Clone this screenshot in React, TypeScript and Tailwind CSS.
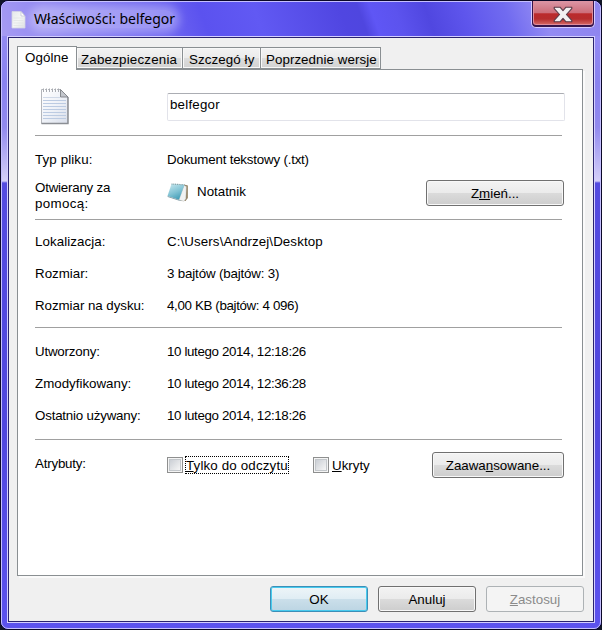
import type { ReactNode } from "react";

function PageIcon() {
  return (
    <svg width="16" height="20" viewBox="0 0 16 20" className="shrink-0">
      <defs>
        <linearGradient id="page" x1="0" y1="0" x2="1" y2="1">
          <stop offset="0" stopColor="#e4e8ea" />
          <stop offset="0.5" stopColor="#f4f6f5" />
          <stop offset="1" stopColor="#dde0e3" />
        </linearGradient>
      </defs>
      <path d="M1 1.5H10L14 6V18H1Z" fill="url(#page)" stroke="#d4d5e4" strokeWidth="0.8" />
      <path d="M10 1.5V6H14Z" fill="#fff" stroke="#b5b6cb" strokeWidth="0.6" />
      <path d="M2.5 8H12.5M2.5 10.5H12.5M2.5 13H12.5M2.5 15.5H12.5" stroke="#dfe3e4" strokeWidth="0.7" />
    </svg>
  );
}

function TextFileIcon() {
  return (
    <svg width="30" height="38" viewBox="0 0 30 38" className="shrink-0">
      <defs>
        <linearGradient id="sheet" x1="0" y1="0" x2="1" y2="1">
          <stop offset="0" stopColor="#ffffff" />
          <stop offset="0.5" stopColor="#eff2f8" />
          <stop offset="1" stopColor="#d9deea" />
        </linearGradient>
      </defs>
      <path d="M1.5 2.5H20.5L27.8 10V36.5H1.5Z" fill="url(#sheet)" stroke="#b4b6bb" />
      <path d="M1.5 36.5H28V10" fill="none" stroke="#8b8e94" strokeWidth="1.4" />
      <path d="M3 13.5H26M3 16.5H26M3 19.5H26M3 22.5H26M3 25.5H26M3 28.5H26M3 31.5H26" stroke="#bccbe2" />
      <path d="M3 10.5H20" stroke="#d0d9e8" />
      <path d="M20.5 2.5L28 10H20.5Z" fill="#c3c6cc" stroke="#7d8086" strokeWidth="0.9" />
      <path d="M3.500 1.500V5M6.500 1.500V5M9.500 1.500V5M12.500 1.500V5M15.500 1.500V5M18.500 1.500V5" stroke="#a9acb2" strokeWidth="1" />
      <path d="M4.500 1.500V4.500M7.500 1.500V4.500M10.500 1.500V4.500M13.500 1.500V4.500M16.500 1.500V4.500" stroke="#fff" strokeWidth="1" />
    </svg>
  );
}

function NotepadIcon() {
  return (
    <svg width="22" height="20" viewBox="0 0 22 20" className="mt-[3px] shrink-0">
      <defs>
        <linearGradient id="cover" x1="0.2" y1="0" x2="0.7" y2="1">
          <stop offset="0" stopColor="#c0e4ec" />
          <stop offset="0.5" stopColor="#83c4d5" />
          <stop offset="1" stopColor="#3b99b4" />
        </linearGradient>
      </defs>
      <path d="M17 1.5L20.8 2.5V15L18.5 18L13 17.5Z" fill="#8d7b5c" />
      <path d="M17 2.5L19.3 3.5L18.8 15.5L17 18.3L12 17Z" fill="#f0f2f2" stroke="#c8c8c4" strokeWidth="0.5" />
      <path d="M4.5 1L17.5 1.8L12 16.8L0.5 13Z" fill="url(#cover)" />
      <path d="M0.5 13L12 16.8L15 17.8L11.5 17.6L0.8 14Z" fill="#7b9aa5" />
      <path d="M4.5 1L17.5 1.8" stroke="#7e9ca2" strokeWidth="1.2" strokeDasharray="1 0.8" />
    </svg>
  );
}

function CloseButton() {
  return (
    <button className="flex h-[27px] w-[64px] items-start justify-center rounded-b-[5px] border border-t-0 border-[#d6caff] bg-[#35144a] p-px pt-0">
      <span className="flex h-[24px] w-full items-center justify-center rounded-b-[3px] border border-t-0 border-[#e08c9a] bg-[linear-gradient(180deg,#dc96a6_0%,#cd6f7b_50%,#bb2a2c_56%,#b62d2e_78%,#d0605e_100%)]">
        <svg width="20" height="17" viewBox="0 0 20 17" className="mt-[3px]">
          <path
            d="M1.2 1.2H7L10 4.6L13 1.2H18.8V2.6L13.4 8.5L18.8 14.4V15.8H13L10 12.4L7 15.8H1.2V14.4L6.6 8.5L1.2 2.6Z"
            fill="#f3f0f1"
            stroke="#5b3b49"
            strokeWidth="1.1"
            strokeLinejoin="round"
          />
        </svg>
      </span>
    </button>
  );
}

function Button({ children, className, kind = "normal" }: { children: ReactNode; className: string; kind?: "normal" | "primary" | "disabled" }) {
  const look = {
    normal: "border-[#707070] bg-[linear-gradient(180deg,#f3f3f3_0%,#ebebeb_48%,#dbdbdb_50%,#cdcdcd_100%)] shadow-[inset_0_0_0_1px_#f8f8f8]",
    primary: "border-[#3c8fb8] bg-[linear-gradient(180deg,#eef5f8_0%,#e0edf4_48%,#cbdfea_50%,#bcd5e3_100%)] shadow-[inset_0_0_0_1px_#48cbee]",
    disabled: "border-[#adb2b5] bg-[#f4f4f4] text-[#8b8b8b]",
  }[kind];
  return (
    <button className={`flex h-[26px] shrink-0 items-center justify-center rounded-[3px] border pt-[2px] leading-4 whitespace-nowrap ${look} ${className}`}>
      <span>{children}</span>
    </button>
  );
}

function Tab({ children, className }: { children: ReactNode; className: string }) {
  return (
    <div className={`h-[22px] border border-l-0 border-[#8a8f92] bg-[linear-gradient(180deg,#f3f3f3_0%,#ebebeb_48%,#dddddd_50%,#d2d2d2_100%)] pt-[4px] leading-4 whitespace-nowrap shadow-[inset_0_0_0_1px_#f8f8f8] ${className}`}>
      {children}
    </div>
  );
}

function Row({ label, children, labelClass = "", valueClass = "" }: { label: string; children: ReactNode; labelClass?: string; valueClass?: string }) {
  return (
    <div className="flex h-8 items-start whitespace-nowrap">
      <span className={`w-[132px] shrink-0 ${labelClass}`}>{label}</span>
      <span className={valueClass}>{children}</span>
    </div>
  );
}

function Separator() {
  return <div className="h-px w-[527px] shrink-0 bg-[#a0a0a0]" />;
}

function CheckBox() {
  return (
    <span className="size-4 border border-[#8e8f8f] bg-[#f4f4f4] p-px">
      <span className="block size-3 border border-[#c3c7cb] bg-[linear-gradient(135deg,#cbcfd5,#f6f6f6)]" />
    </span>
  );
}

export default function App() {
  return (
    <div className="flex h-[630px] w-[602px] flex-col overflow-hidden bg-[#111626] font-['Liberation_Sans',Arial,sans-serif] text-[13.333px] leading-4 text-black">
      <div className="flex h-[630px] flex-col rounded-[8px] border border-[#0b0828] bg-[#5147e4]">
        <div className="flex h-[628px] flex-col rounded-[7px] border border-[#c5bfff] bg-[linear-gradient(180deg,#9a90f5_0px,#8982ef_80px,#9189ee_125px,#d4cff8_179px,#544be0_181px,#5047de_430px,#5c52ee_100%)]">
          <header className="flex h-[34px] shrink-0 rounded-t-[6px] bg-[linear-gradient(70deg,#a69bf2_0%,#8b82f2_12%,#7168f1_26%,#5b52ef_34%,#6159f3_43%,#5046e1_57%,#4f46df_60%,#5f56f5_62%,#5c53ee_66%,#5047e0_71%,#5e55ec_77%,#716bf0_84%,#938bf3_90%,#8e84ee_100%)]">
            <div className="flex grow pt-[8px] pl-[9px]">
              <PageIcon />
              <span className="ml-[7px] h-[18px] rounded-[9px] bg-white/30 font-['Noto_Sans','Open_Sans',sans-serif] text-[14px] leading-[18px] whitespace-nowrap shadow-[0_0_9px_5px_rgba(255,255,255,0.3)]">
                Właściwości: belfegor
              </span>
            </div>
            <div className="-mt-px mr-[5px]">
              <CloseButton />
            </div>
          </header>
          <div className="mx-[5px] h-[587px] border border-[#d4ceff]">
            <main className="flex h-[585px] flex-col border border-[#2a236f] bg-[#f0f0f0] pl-[8px]">
              <div className="flex h-[31px] shrink-0 items-end">
                <div className="z-10 -mb-px h-[24px] w-[60px] border border-b-0 border-[#8a8f92] bg-white pt-[3px] pl-[7px] tracking-[0.1px]">Ogólne</div>
                <Tab className="w-[106px] pl-[4px] tracking-[0.2px]">Zabezpieczenia</Tab>
                <Tab className="w-[78px] pl-[6px] tracking-[0.1px]">Szczegó ły</Tab>
                <Tab className="w-[120px] pl-[5px] tracking-[0.06px]">Poprzednie wersje</Tab>
              </div>
              <section className="flex h-[507px] w-[566px] shrink-0 flex-col border border-[#8a8f92] bg-white pl-[17px] shadow-[2px_2px_0_#fafafa]">
                <div className="flex h-[65px] shrink-0">
                  <div className="w-[132px] pt-[17px] pl-[5px]">
                    <TextFileIcon />
                  </div>
                  <div className="mt-[23px] h-[28px] w-[398px] rounded-[2px] border border-[#e2e3ea] border-t-[#abadb3] pt-[3px] pl-[2px] tracking-[0.2px]">belfegor</div>
                </div>
                <Separator />
                <div className="flex h-[83px] shrink-0 flex-col pt-[16px]">
                  <div className="h-[28px]">
                    <Row label="Typ pliku:" labelClass="tracking-[0.12px]" valueClass="tracking-[-0.2px]">Dokument tekstowy (.txt)</Row>
                  </div>
                  <div className="flex">
                    <div className="w-[132px] shrink-0">
                      <span className="block tracking-[-0.22px]">Otwierany za</span>
                      <span className="block tracking-[0.35px]">pomocą:</span>
                    </div>
                    <NotepadIcon />
                    <span className="mt-[4px] ml-[8px] w-[229px]">Notatnik</span>
                    <Button className="w-[138px]">
                      Z<u>m</u>ień...
                    </Button>
                  </div>
                </div>
                <Separator />
                <div className="h-[107px] shrink-0 pt-[14px]">
                  <Row label="Lokalizacja:" labelClass="tracking-[0.08px]" valueClass="tracking-[0.1px]">C:\Users\Andrzej\Desktop</Row>
                  <Row label="Rozmiar:" valueClass="tracking-[-0.16px]">3 bajtów (bajtów: 3)</Row>
                  <Row label="Rozmiar na dysku:" labelClass="tracking-[-0.05px]" valueClass="tracking-[-0.35px]">4,00 KB (bajtów: 4 096)</Row>
                </div>
                <Separator />
                <div className="h-[111px] shrink-0 pt-[16px]">
                  <Row label="Utworzony:" labelClass="tracking-[-0.2px]" valueClass="tracking-[-0.36px]">10 lutego 2014, 12:18:26</Row>
                  <Row label="Zmodyfikowany:" valueClass="tracking-[-0.36px]">10 lutego 2014, 12:36:28</Row>
                  <Row label="Ostatnio używany:" labelClass="tracking-[-0.2px]" valueClass="tracking-[-0.36px]">10 lutego 2014, 12:18:26</Row>
                </div>
                <Separator />
                <div className="flex pt-[12px]">
                  <span className="mt-[4px] w-[132px] shrink-0 tracking-[-0.2px]">Atrybuty:</span>
                  <label className="flex w-[146px] items-start pt-[5px]">
                    <CheckBox />
                    <span className="-mt-px ml-[2px] h-[18px] w-[104px] border border-dotted border-black leading-[18px] tracking-[0.16px] whitespace-nowrap">
                      <u>T</u>ylko do odczytu
                    </span>
                  </label>
                  <label className="flex w-[119px] items-start pt-[5px]">
                    <CheckBox />
                    <span className="mt-px ml-[3px]">
                      <u>U</u>kryty
                    </span>
                  </label>
                  <Button className="w-[132px]">
                    Zaawa<u>n</u>sowane...
                  </Button>
                </div>
              </section>
              <footer className="flex gap-[10px] pt-[10px] pl-[253px]">
                <Button kind="primary" className="w-[98px]">OK</Button>
                <Button className="w-[98px]">Anuluj</Button>
                <Button kind="disabled" className="w-[98px]">
                  <u>Z</u>astosuj
                </Button>
              </footer>
            </main>
          </div>
        </div>
      </div>
    </div>
  );
}
